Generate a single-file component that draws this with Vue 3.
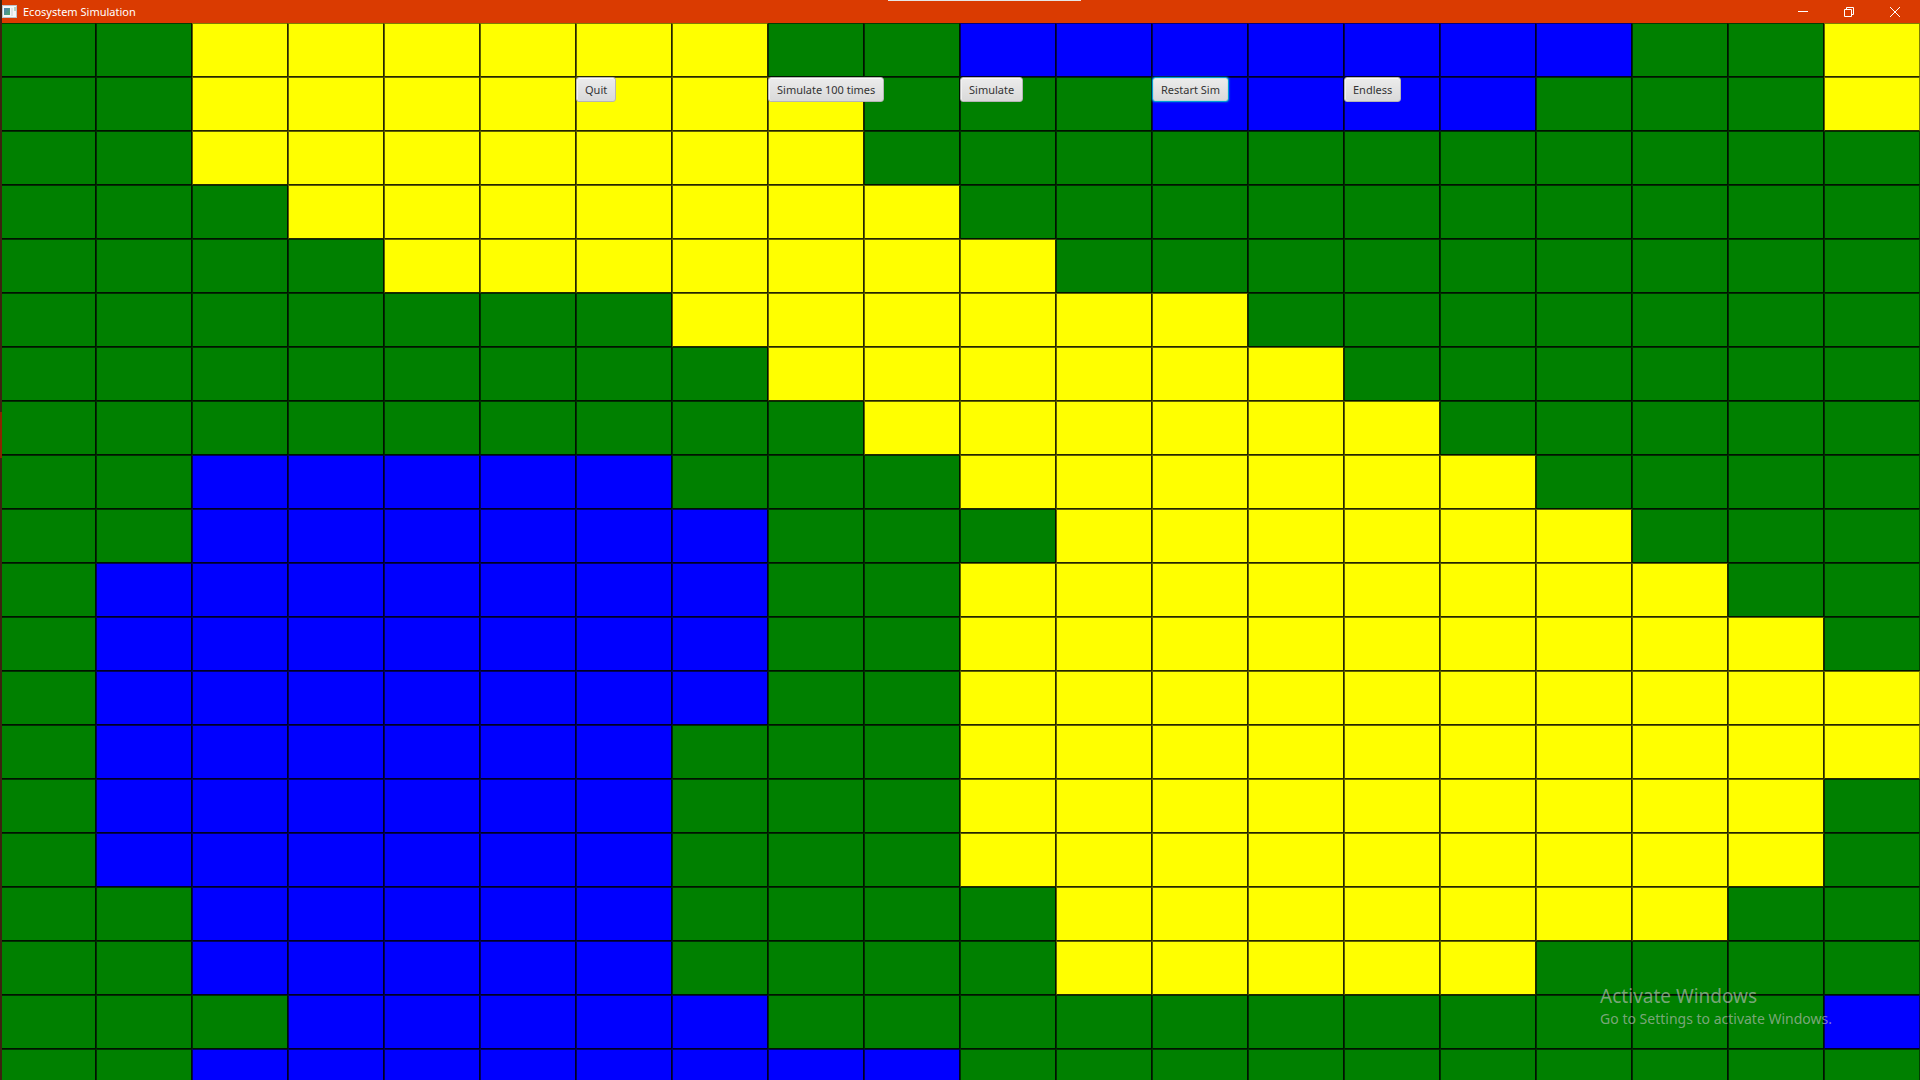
<script setup>
// Terrain rows: g = grass, y = sand, b = water
const terrain = [
  'ggyyyyyyggbbbbbbbggy',
  'ggyyyyyyygggbbbbgggy',
  'ggyyyyyyyggggggggggg',
  'gggyyyyyyygggggggggg',
  'ggggyyyyyyyggggggggg',
  'gggggggyyyyyyggggggg',
  'ggggggggyyyyyygggggg',
  'gggggggggyyyyyyggggg',
  'ggbbbbbgggyyyyyygggg',
  'ggbbbbbbgggyyyyyyggg',
  'gbbbbbbbggyyyyyyyygg',
  'gbbbbbbbggyyyyyyyyyg',
  'gbbbbbbbggyyyyyyyyyy',
  'gbbbbbbgggyyyyyyyyyy',
  'gbbbbbbgggyyyyyyyyyg',
  'gbbbbbbgggyyyyyyyyyg',
  'ggbbbbbggggyyyyyyygg',
  'ggbbbbbggggyyyyygggg',
  'gggbbbbbgggggggggggb',
  'ggbbbbbbbbgggggggggg',
]
const cells = terrain.join('').split('')
</script>

<template>
  <div class="window">
    <header class="titlebar">
      <svg class="app-icon" width="15" height="13" viewBox="0 0 15 13" aria-hidden="true">
        <defs>
          <linearGradient id="pane" x1="0" y1="0" x2="1" y2="1">
            <stop offset="0" stop-color="#4a7fb5" />
            <stop offset="1" stop-color="#4fa868" />
          </linearGradient>
        </defs>
        <rect width="15" height="13" fill="#b9c3cc" />
        <rect x="1" y="1" width="13" height="11" fill="#f4f6f7" />
        <rect x="2" y="3" width="6" height="7" fill="url(#pane)" />
        <rect x="9" y="3" width="2" height="8" fill="#dfe3e6" />
        <rect x="12" y="2" width="2" height="4" fill="#b5d3c6" />
      </svg>
      <h1 class="title">Ecosystem Simulation</h1>
      <div class="caption">
        <button class="caption-btn" type="button" aria-label="Minimize">
          <svg width="10" height="10" viewBox="0 0 10 10"><path d="M0 4.5H10" /></svg>
        </button>
        <button class="caption-btn" type="button" aria-label="Restore">
          <svg width="10" height="10" viewBox="0 0 10 10">
            <path d="M.5 2.5H7.500V9.500H.5ZM2.500 2.500V.5H9.500V7.500H7.500" />
          </svg>
        </button>
        <button class="caption-btn" type="button" aria-label="Close">
          <svg width="10" height="10" viewBox="0 0 10 10"><path d="M0 0L10 10M10 0L0 10" /></svg>
        </button>
      </div>
      <span class="top-tab"></span>
    </header>

    <main class="world">
      <div class="board">
        <div v-for="(kind, i) in cells" :key="i" class="cell" :class="kind"></div>
      </div>
      <div class="board controls">
        <button class="btn quit" type="button">Quit</button>
        <button class="btn hundred" type="button">Simulate 100 times</button>
        <button class="btn once" type="button">Simulate</button>
        <button class="btn restart" type="button">Restart Sim</button>
        <button class="btn endless" type="button">Endless</button>
      </div>
    </main>

    <div class="edge"><span class="edge-mark"></span></div>

    <aside class="watermark">
      <p class="wm-title">Activate Windows</p>
      <p class="wm-text">Go to Settings to activate Windows.</p>
    </aside>
  </div>
</template>

<style>
body {
  overflow: hidden;
}
</style>

<style scoped>
.window {
  position: relative;
  display: flex;
  flex-direction: column;
  height: 100vh;
  overflow: hidden;
  font-family: "Segoe UI", "Noto Sans", "Open Sans", sans-serif;
}
.titlebar {
  position: relative;
  display: flex;
  flex: none;
  align-items: center;
  height: 23px;
  padding-left: 2px;
  background: #da3b01;
  color: #fff;
}
.app-icon {
  flex: none;
}
.title {
  margin: 0 0 0 6px;
  font-size: 11px;
  font-weight: 400;
  line-height: 22px;
}
.caption {
  display: flex;
  height: 21px;
  margin-left: auto;
  margin-right: 2px;
}
.caption-btn {
  display: flex;
  align-items: center;
  justify-content: center;
  width: 46px;
  padding: 0;
  border: 0;
  background: transparent;
}
.caption-btn path {
  fill: none;
  stroke: #fff;
}
.top-tab {
  position: absolute;
  top: 0;
  left: 50%;
  width: 193px;
  height: 1px;
  margin-left: -72px;
  background: #e6e6e6;
}
.world {
  position: relative;
  flex: 1;
  min-height: 0;
}
.board {
  display: grid;
  grid-template-columns: repeat(20, 1fr);
  grid-auto-rows: 54px;
}
.cell {
  border: 1px solid rgba(0, 0, 0, 0.62);
  border-right-color: rgba(0, 0, 0, 0.85);
  border-bottom-color: rgba(0, 0, 0, 0.85);
}
.cell:nth-child(-n + 20) {
  border-top-color: rgba(0, 0, 0, 0.5);
}
.cell:nth-child(20n) {
  border-right-color: rgba(0, 0, 0, 0.5);
}
.g {
  background-color: #008000;
}
.y {
  background-color: #ffff00;
}
.b {
  background-color: #0000ff;
}
.controls {
  position: absolute;
  inset: 0;
  grid-template-rows: 54px;
}
.btn {
  grid-row: 2;
  justify-self: start;
  align-self: start;
  height: 25px;
  padding: 0 8px;
  border: 1px solid #b5b5b5;
  border-radius: 3px;
  background: linear-gradient(#ececec, #d9d9d9);
  box-shadow: inset 0 1px #fbfbfb, inset 1px 0 #f2f2f2;
  color: #333;
  font-family: inherit;
  font-size: 11px;
  line-height: 23px;
  white-space: nowrap;
}
.quit {
  grid-column: 7;
}
.hundred {
  grid-column: 9 / span 2;
}
.once {
  grid-column: 11;
}
.restart {
  grid-column: 13;
  border-color: #039ed3;
  box-shadow: 0 0 2px #039ed3, inset 0 0 1px #039ed3;
}
.endless {
  grid-column: 15;
}
.edge {
  position: absolute;
  top: 0;
  bottom: 0;
  left: 0;
  width: 2px;
  background: #3c2310;
}
.edge-mark {
  position: absolute;
  top: 412px;
  left: 0;
  width: 2px;
  height: 46px;
  background: #8a2500;
}
.watermark {
  position: absolute;
  right: 88px;
  bottom: 51px;
  color: rgba(190, 190, 190, 0.65);
  pointer-events: none;
}
.wm-title,
.wm-text {
  margin: 0;
  white-space: nowrap;
}
.wm-title {
  font-size: 19px;
  line-height: 25px;
}
.wm-text {
  font-size: 14px;
  line-height: 20px;
}
</style>
